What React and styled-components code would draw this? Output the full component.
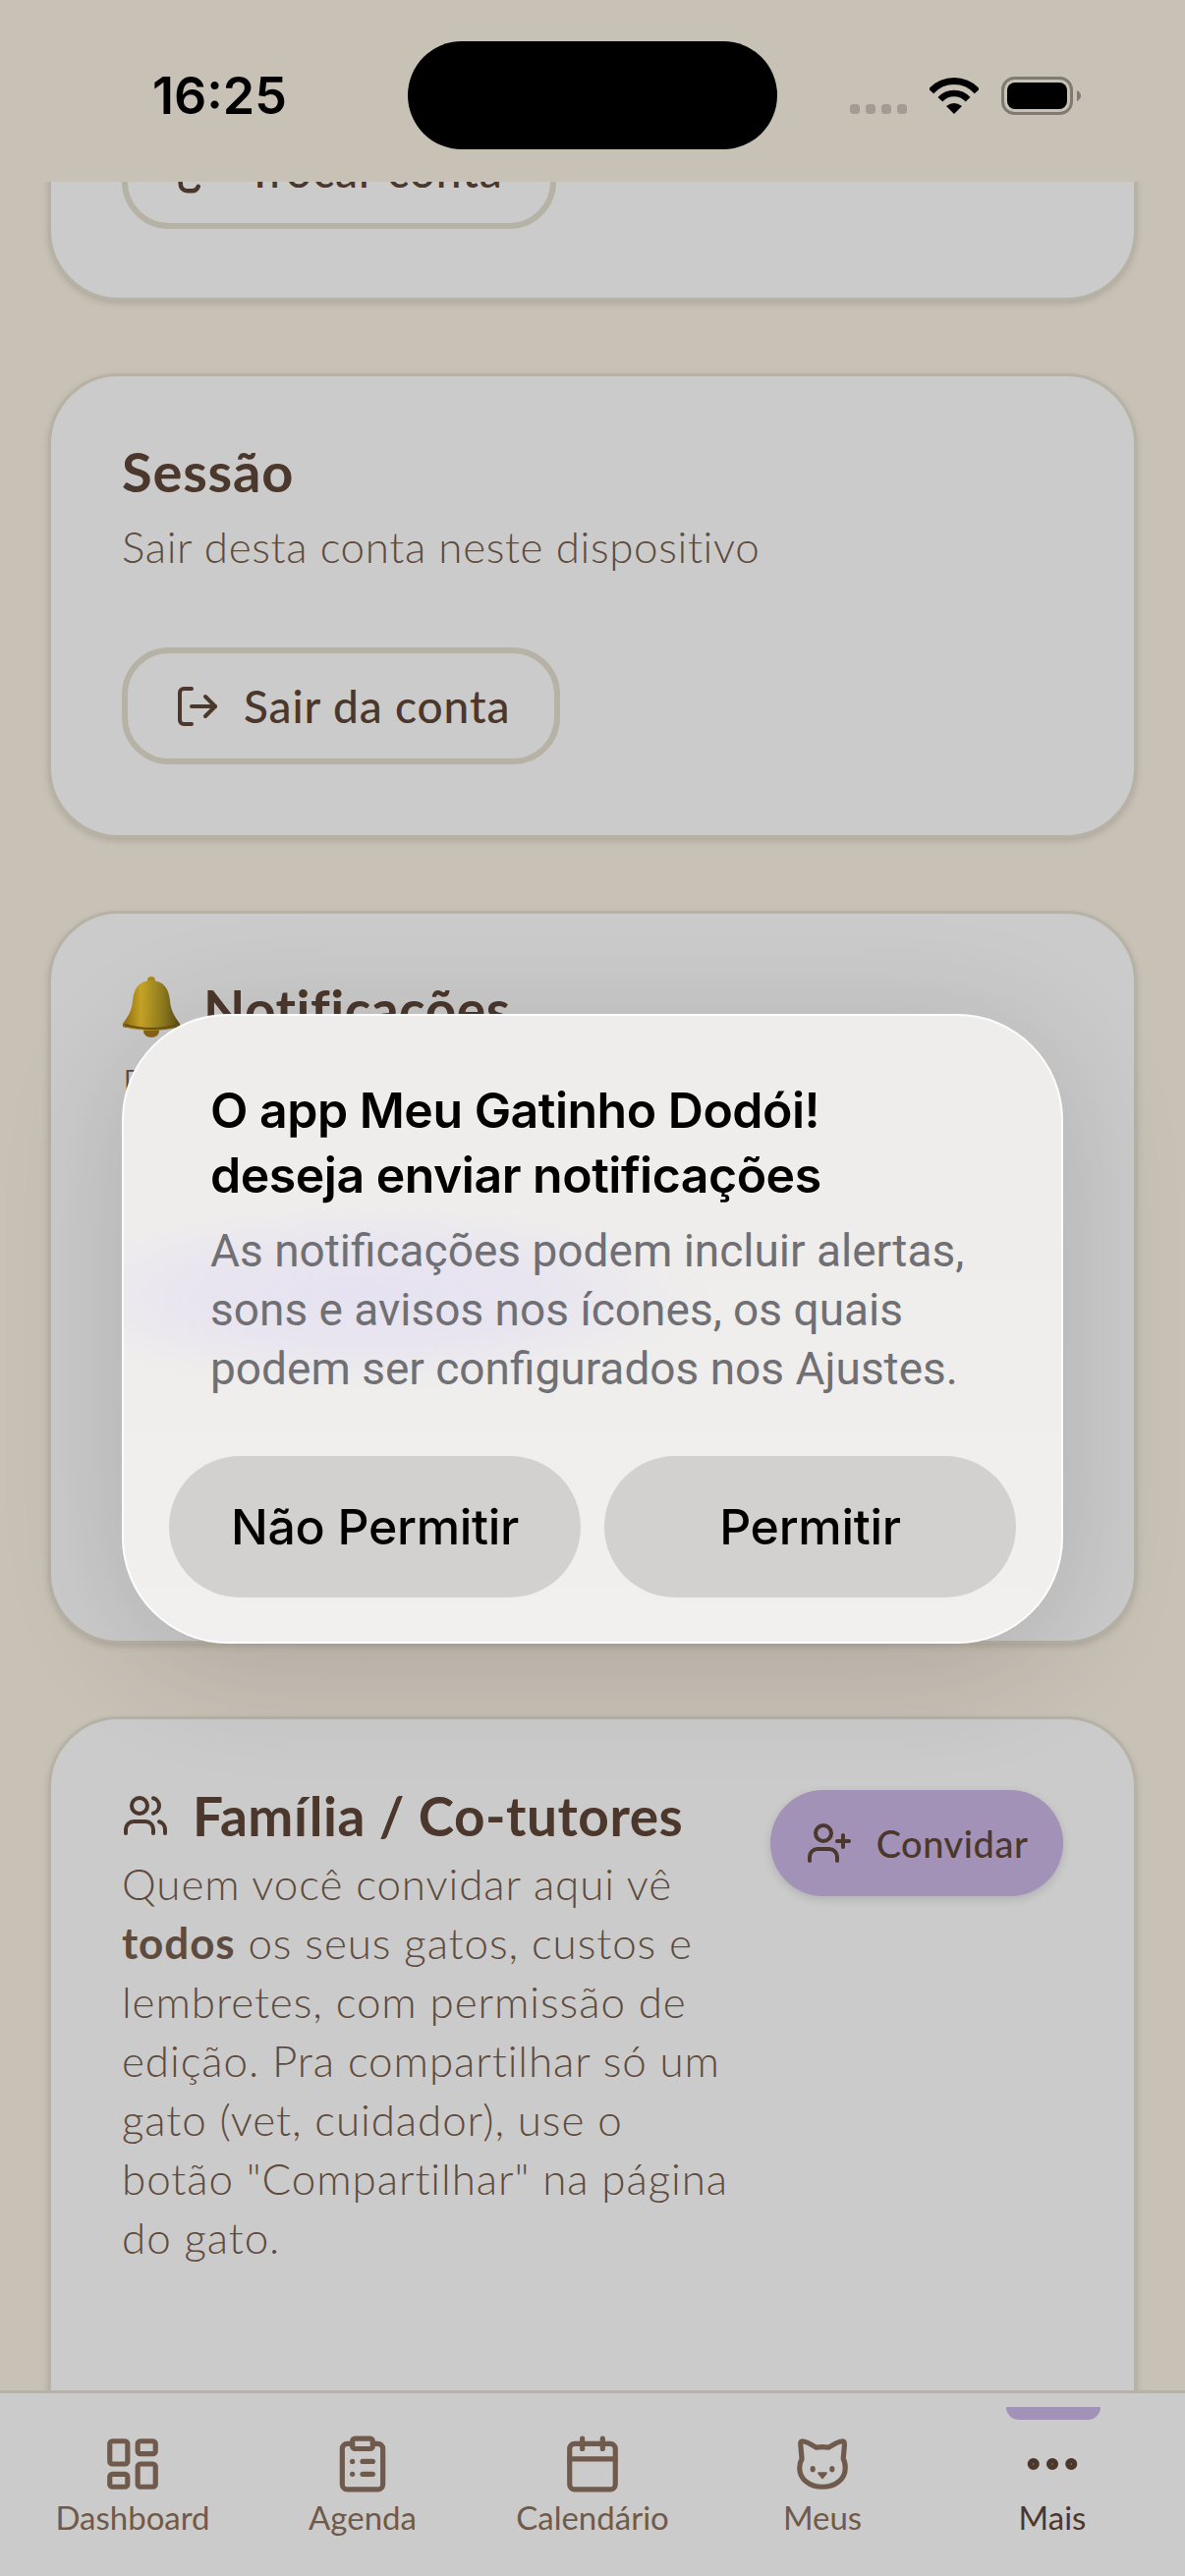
import React from 'react';
import styled, { createGlobalStyle } from 'styled-components';
import {
  LogOut,
  Users,
  UserPlus,
  LayoutDashboard,
  ClipboardList,
  Calendar,
  Ellipsis,
} from 'lucide-react';

const GlobalStyle = createGlobalStyle`
  html, body {
    margin: 0;
    padding: 0;
    background: #c8c1b6;
  }
  * {
    box-sizing: border-box;
  }
`;

const Screen = styled.div`
  position: relative;
  width: 1206px;
  height: 2622px;
  overflow: hidden;
  display: flex;
  flex-direction: column;
  background: #c8c1b6;
  font-family: 'Lato', 'Noto Sans', sans-serif;
  color: #4b372c;
`;

const StatusBar = styled.div`
  flex: 0 0 185px;
  display: flex;
  align-items: center;
  padding: 9px 106px 0 155px;
`;

const Clock = styled.div`
  width: 260px;
  font-family: 'Inter', 'Liberation Sans', sans-serif;
  font-size: 52px;
  font-weight: 600;
  color: #000;
`;

const Island = styled.div`
  width: 376px;
  height: 110px;
  border-radius: 55px;
  background: #000;
`;

const StatusIcons = styled.div`
  margin-left: auto;
  display: flex;
  align-items: center;
  gap: 23px;
`;

const Scroller = styled.div`
  flex: 1;
  min-height: 0;
  overflow: hidden;
  padding: 0 49px;
  display: flex;
  flex-direction: column;
  gap: 74px;
`;

const Card = styled.section`
  flex: none;
  min-height: ${(p) => p.$minHeight || 0}px;
  margin-top: ${(p) => p.$offset || 0}px;
  padding: 72px 72px ${(p) => p.$pb || 70}px;
  background: #cbcbcb;
  border: 3px solid #b6b2a6;
  border-radius: 72px;
  box-shadow: 0 3px 6px rgba(90, 80, 60, 0.22);
`;

const CardTitle = styled.h2`
  margin: 0 0 21px;
  font-size: 56px;
  line-height: 50px;
  font-weight: 700;
  letter-spacing: 0.8px;
  color: #4b372c;
`;

const TitleRow = styled.div`
  display: flex;
  align-items: center;
  gap: ${(p) => p.$gap || 23}px;
  margin-bottom: ${(p) => p.$mb || 14}px;

  h2 {
    margin: 0;
  }
`;

const BigTitle = styled(CardTitle)`
  font-size: 55px;
  letter-spacing: 0.5px;
  white-space: nowrap;
`;

const Subtitle = styled.p`
  margin: 0 0 73px;
  font-size: 44px;
  line-height: 60px;
  font-weight: 300;
  letter-spacing: 0.6px;
  color: #5f4b3e;
`;

const BodyText = styled(Subtitle)`
  margin: 0;
  letter-spacing: 0.9px;
  white-space: nowrap;

  strong {
    font-weight: 700;
  }
`;

const OutlineButton = styled.button`
  display: flex;
  align-items: center;
  gap: ${(p) => p.$gap || 23}px;
  width: ${(p) => p.$width}px;
  height: 119px;
  padding: 0 0 0 47px;
  background: transparent;
  border: 6px solid #b6b2a6;
  border-radius: 48px;
  font-family: inherit;
  font-size: 46px;
  font-weight: 500;
  letter-spacing: 0.9px;
  color: #4b372c;
`;

const FilledButton = styled.button`
  flex: none;
  display: flex;
  align-items: center;
  justify-content: center;
  gap: 24px;
  width: 298px;
  height: 108px;
  border: none;
  border-radius: 54px;
  background: #a292b8;
  box-shadow: 0 3px 9px rgba(60, 50, 70, 0.18);
  font-family: inherit;
  font-size: 38px;
  font-weight: 500;
  letter-spacing: 0.5px;
  color: #4b372c;
`;

const FamilyHeader = styled.div`
  display: flex;
  justify-content: space-between;
  align-items: flex-start;
`;

const FamilyText = styled.div`
  margin-top: 1px;
`;

const BottomNav = styled.nav`
  flex: 0 0 189px;
  display: grid;
  grid-template-columns: repeat(5, 1fr);
  padding: 0 18px;
  background: #cbcbcb;
  border-top: 3px solid #b6b2a6;
  position: relative;
  z-index: 1;
`;

const NavItem = styled.div`
  position: relative;
  display: flex;
  flex-direction: column;
  align-items: center;
  padding-top: 41px;
  color: ${(p) => (p.$active ? '#4b372c' : '#6f5a4c')};
`;

const NavIcon = styled.span`
  height: 62px;
  display: flex;
  align-items: center;
  justify-content: center;
`;

const NavLabel = styled.span`
  margin-top: 1px;
  font-size: 33px;
  line-height: 44px;
  font-weight: 400;
`;

const ActiveBar = styled.span`
  position: absolute;
  top: 14px;
  left: 50%;
  width: 96px;
  height: 13px;
  margin-left: -47px;
  background: #a292b8;
  border-radius: 0 0 13px 13px;
`;

const Dialog = styled.div`
  position: absolute;
  z-index: 2;
  left: 124px;
  top: 1032px;
  width: 958px;
  height: 641px;
  padding: 63px 46px 45px;
  display: flex;
  flex-direction: column;
  border-radius: 108px;
  border: 2px solid rgba(255, 255, 255, 0.85);
  background:
    radial-gradient(ellipse 340px 95px at 250px 285px, #e6e2f1 0%, rgba(230, 226, 241, 0.7) 55%, rgba(230, 226, 241, 0) 100%),
    linear-gradient(180deg, #eeedeb 0%, #efeeec 60%, #f1f0ef 100%);
  box-shadow: 0 20px 130px rgba(0, 0, 0, 0.14);
  font-family: 'Inter', 'Roboto', 'Liberation Sans', sans-serif;
`;

const DialogTitle = styled.div`
  padding-left: 42px;
  font-size: 50px;
  line-height: 66px;
  font-weight: 600;
  letter-spacing: -0.5px;
  white-space: nowrap;
  color: #000;
`;

const DialogBody = styled.div`
  padding-left: 42px;
  margin-top: 14px;
  font-family: 'Roboto', 'Inter', sans-serif;
  font-size: 46px;
  line-height: 60px;
  font-weight: 400;
  white-space: nowrap;
  color: #707074;
`;

const DialogActions = styled.div`
  margin-top: auto;
  display: grid;
  grid-template-columns: 1fr 1fr;
  gap: 24px;
`;

const DialogButton = styled.button`
  height: 144px;
  border: none;
  border-radius: 72px;
  background: #d2d1d0;
  font-family: inherit;
  font-size: 50px;
  font-weight: 500;
  letter-spacing: -0.3px;
  color: #000;
`;

const SignalDots = () => (
  <svg width="58" height="10" viewBox="0 0 58 10" style={{ alignSelf: 'flex-end', marginBottom: 1 }}>
    {[0, 16, 32, 48].map((x) => (
      <rect key={x} x={x} width="10" height="10" rx="3.5" fill="#a19c94" />
    ))}
  </svg>
);

const WifiIcon = () => (
  <svg width="50" height="37" viewBox="0 0 50 37" fill="none">
    <path d="M1.6 14A31.5 31.5 0 0 1 48.4 14" stroke="#000" strokeWidth="7" />
    <path d="M10.9 22.3A19 19 0 0 1 39.1 22.3" stroke="#000" strokeWidth="6.5" />
    <path d="M25 37L17 29Q25 23 33 29Z" fill="#000" />
  </svg>
);

const BatteryIcon = () => (
  <svg width="81" height="39" viewBox="0 0 81 39" fill="none">
    <rect x="1.5" y="1.5" width="70" height="36" rx="12" stroke="#7f7b73" strokeWidth="3" />
    <rect x="6" y="6" width="61" height="27" rx="8" fill="#000" />
    <path d="M77 14c2.400 1 4 3 4 5.500s-1.600 4.500-4 5.500z" fill="#7f7b73" />
  </svg>
);

const SwapIcon = () => (
  <svg width="54" height="54" viewBox="0 0 24 24" fill="none" stroke="currentColor" strokeWidth="2" strokeLinecap="round">
    <path d="M3 14v4a3 3 0 0 0 3 3h2a3 3 0 0 0 3-2" />
    <path d="M21 10V6a3 3 0 0 0-3-3h-2a3 3 0 0 0-3 2" />
  </svg>
);

const BellEmoji = () => (
  <svg width="60" height="62" viewBox="0 0 60 62" style={{ flex: 'none', margin: '-8px 0 -4px' }}>
    <defs>
      <linearGradient id="bellBody" x1="0" x2="1" y1="0" y2="0">
        <stop offset="0" stopColor="#8c6a14" />
        <stop offset="0.32" stopColor="#c9a526" />
        <stop offset="0.7" stopColor="#8f7d1e" />
        <stop offset="1" stopColor="#5c4a12" />
      </linearGradient>
    </defs>
    <ellipse cx="30" cy="56" rx="8" ry="6" fill="#8a6414" />
    <circle cx="30" cy="4" r="4" fill="#a98a1e" />
    <path
      d="M30 4C17 4 12 13 11 25C10 36 5 42 1 48C0 51 2 52 5 52C20 56 40 56 55 52C58 52 60 51 59 48C55 42 50 36 49 25C48 13 43 4 30 4Z"
      fill="url(#bellBody)"
    />
    <path d="M3 49C20 54 40 54 57 49" stroke="#6e5210" strokeWidth="2" fill="none" />
  </svg>
);

const CatIcon = () => (
  <svg width="62" height="62" viewBox="0 0 24 24" fill="none" stroke="currentColor" strokeWidth="2" strokeLinejoin="round">
    <path d="M4 3C5.500 3 8 4.500 9.500 5.500C11 5.200 13 5.200 14.500 5.500C16 4.500 18.500 3 20 3C20.500 3 20.700 3.500 20.700 4.500L20.200 10C21 11.200 21 12.300 21 13.500C21 18 17 21 12 21C7 21 3 18 3 13.500C3 12.300 3.200 11.200 3.900 10L3.400 4.500C3.300 3.500 3.500 3 4 3Z" />
    <ellipse cx="8.200" cy="14" rx="1" ry="1.200" fill="currentColor" stroke="none" />
    <ellipse cx="15.800" cy="14" rx="1" ry="1.200" fill="currentColor" stroke="none" />
    <path d="M10.500 15.600h3L12 17.500z" fill="currentColor" strokeWidth="0.8" />
  </svg>
);

const navItems = [
  { label: 'Dashboard', icon: <LayoutDashboard size={62} strokeWidth={2} /> },
  { label: 'Agenda', icon: <ClipboardList size={62} strokeWidth={2} /> },
  { label: 'Calendário', icon: <Calendar size={62} strokeWidth={2} /> },
  { label: 'Meus', icon: <CatIcon /> },
  { label: 'Mais', icon: <Ellipsis size={66} strokeWidth={2.4} />, active: true },
];

const App = () => (
  <Screen>
    <GlobalStyle />

    <StatusBar>
      <Clock>16:25</Clock>
      <Island />
      <StatusIcons>
        <SignalDots />
        <WifiIcon />
        <BatteryIcon />
      </StatusIcons>
    </StatusBar>

    <Scroller>
      <Card $offset={-146}>
        <OutlineButton $width={442} $gap={20}>
          <SwapIcon />
          Trocar conta
        </OutlineButton>
      </Card>

      <Card $pb={72}>
        <CardTitle>Sessão</CardTitle>
        <Subtitle>Sair desta conta neste dispositivo</Subtitle>
        <OutlineButton $width={446}>
          <LogOut size={48} strokeWidth={2} />
          Sair da conta
        </OutlineButton>
      </Card>

      <Card $minHeight={746}>
        <TitleRow $mb={21} $gap={23}>
          <BellEmoji />
          <BigTitle>Notificações</BigTitle>
        </TitleRow>
        <BodyText>
          Receba lembretes de vacinas, remédios
          <br />
          e consultas dos seus gatos neste
          <br />
          dispositivo.
        </BodyText>
      </Card>

      <Card $minHeight={900}>
        <FamilyHeader>
          <FamilyText>
            <TitleRow $gap={24}>
              <Users size={48} strokeWidth={2} />
              <BigTitle>Família / Co-tutores</BigTitle>
            </TitleRow>
            <BodyText>
              Quem você convidar aqui vê
              <br />
              <strong>todos</strong> os seus gatos, custos e
              <br />
              lembretes, com permissão de
              <br />
              edição. Pra compartilhar só um
              <br />
              gato (vet, cuidador), use o
              <br />
              botão "Compartilhar" na página
              <br />
              do gato.
            </BodyText>
          </FamilyText>
          <FilledButton>
            <UserPlus size={48} strokeWidth={2} />
            Convidar
          </FilledButton>
        </FamilyHeader>
      </Card>
    </Scroller>

    <BottomNav>
      {navItems.map((item) => (
        <NavItem key={item.label} $active={item.active}>
          {item.active && <ActiveBar />}
          <NavIcon>{item.icon}</NavIcon>
          <NavLabel>{item.label}</NavLabel>
        </NavItem>
      ))}
    </BottomNav>

    <Dialog>
      <DialogTitle>
        O app Meu Gatinho Dodói!
        <br />
        deseja enviar notificações
      </DialogTitle>
      <DialogBody>
        As notificações podem incluir alertas,
        <br />
        sons e avisos nos ícones, os quais
        <br />
        podem ser configurados nos Ajustes.
      </DialogBody>
      <DialogActions>
        <DialogButton>Não Permitir</DialogButton>
        <DialogButton>Permitir</DialogButton>
      </DialogActions>
    </Dialog>
  </Screen>
);

export default App;
